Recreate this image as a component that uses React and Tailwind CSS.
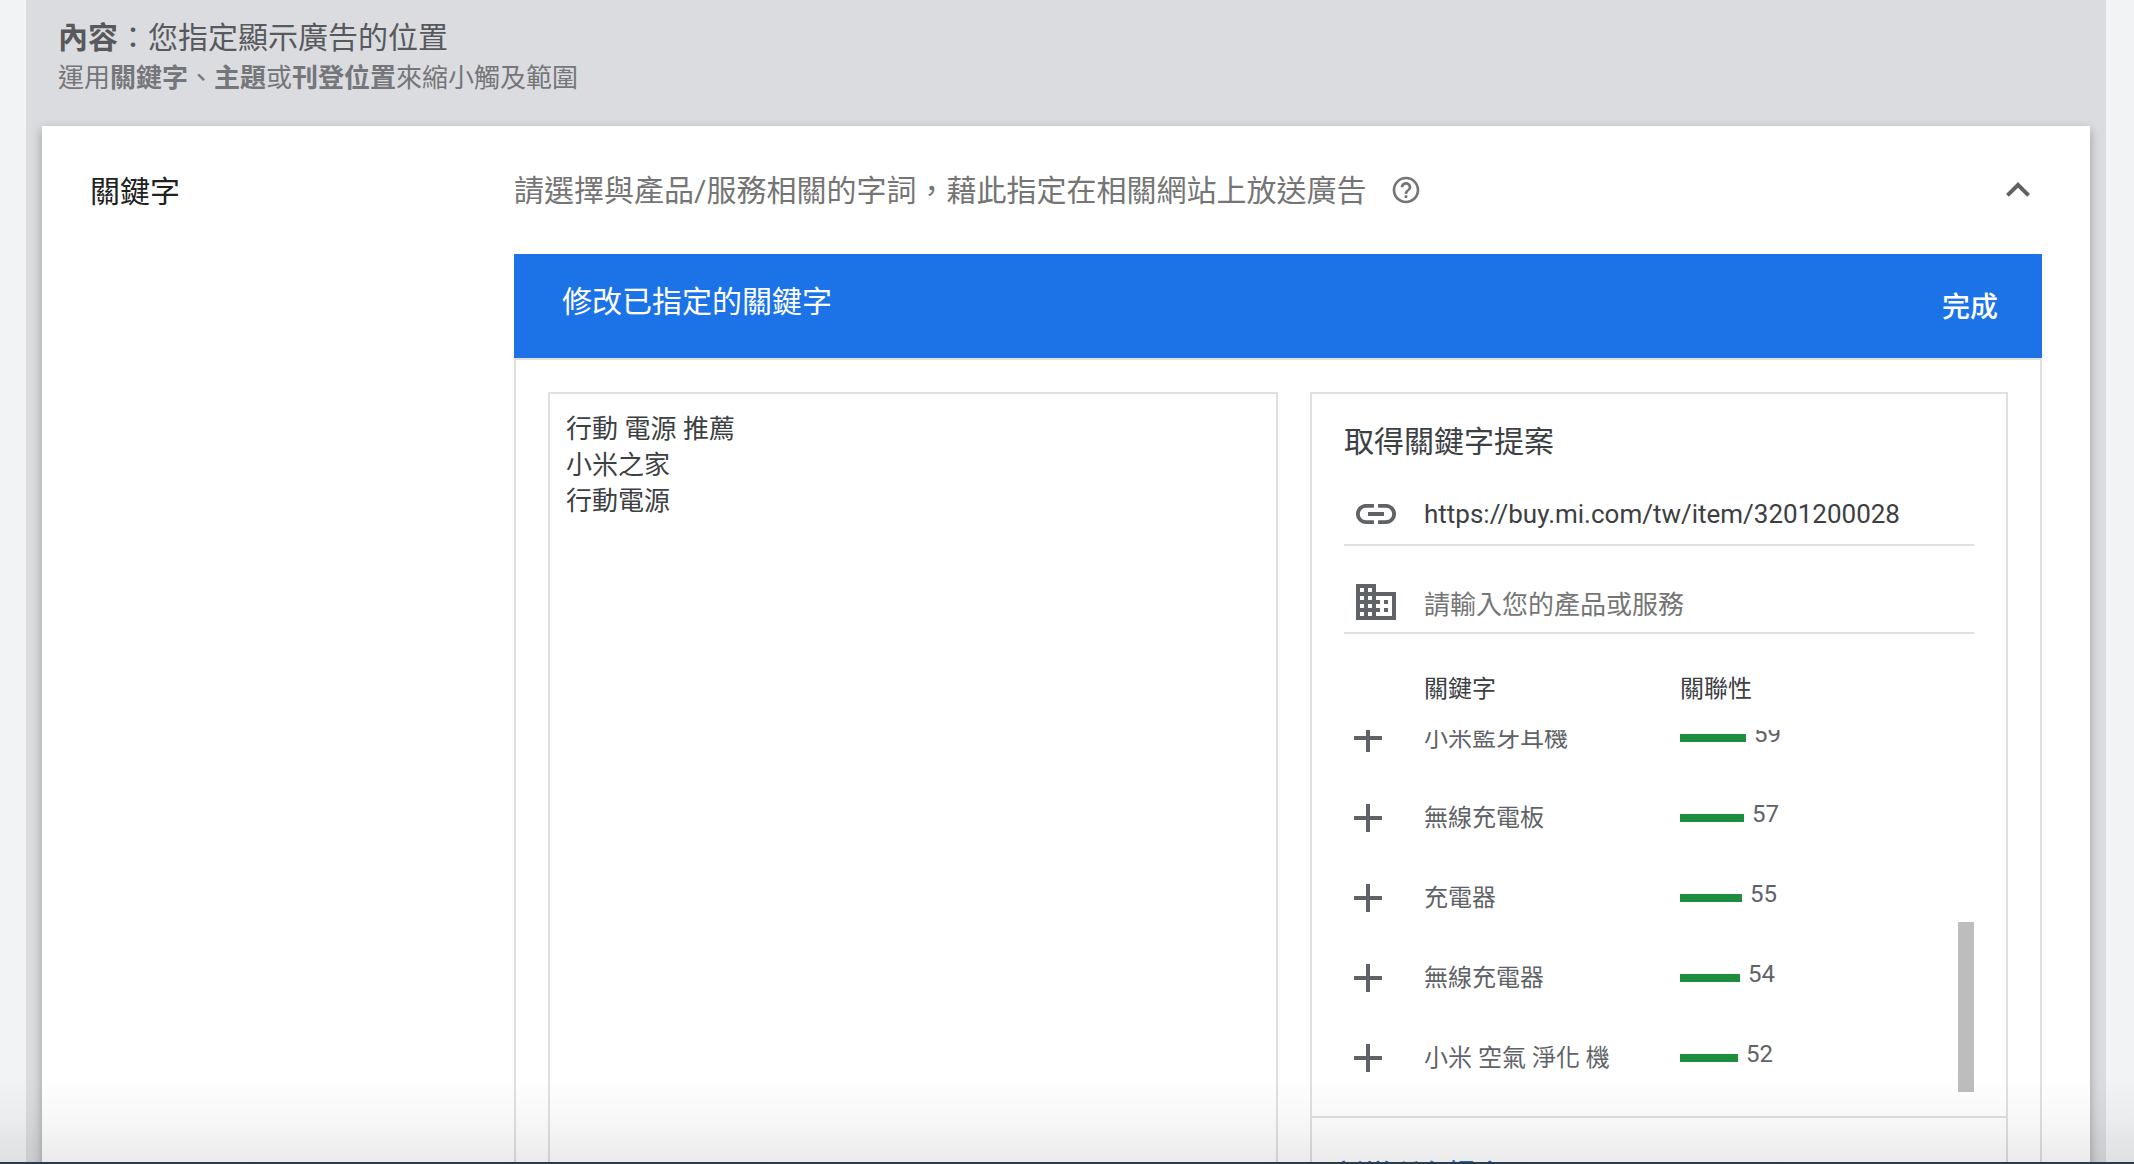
import React, { useState } from "react";
import {
  MdAdd,
  MdBusiness,
  MdExpandLess,
  MdHelpOutline,
  MdLink,
} from "react-icons/md";

const suggestions = [
  { keyword: "小米藍牙耳機", score: 59 },
  { keyword: "無線充電板", score: 57 },
  { keyword: "充電器", score: 55 },
  { keyword: "無線充電器", score: 54 },
  { keyword: "小米 空氣 淨化 機", score: 52 },
];

const SectionHeader = () => (
  <header className="px-8 pt-4 pb-[30px]">
    <h1 className="text-[30px] leading-[44px] text-[#58595c]">
      <b>內容</b>：您指定顯示廣告的位置
    </h1>
    <p className="text-[26px] leading-9 text-[#757679]">
      運用<b>關鍵字</b>、<b>主題</b>或<b>刊登位置</b>來縮小觸及範圍
    </p>
  </header>
);

const SuggestionList = ({ onAdd }) => (
  <div className="relative h-[362px] overflow-hidden">
    <table className="-mt-8 w-full table-fixed text-left text-2xl text-[#5f6368]">
      <colgroup>
        <col className="w-20" />
        <col className="w-64" />
        <col />
      </colgroup>
      <tbody>
        {suggestions.map((item) => (
          <tr key={item.keyword} className="h-20">
            <td className="p-0">
              <button
                type="button"
                aria-label={`新增 ${item.keyword}`}
                className="block"
                onClick={() => onAdd(item.keyword)}
              >
                <MdAdd size={48} />
              </button>
            </td>
            <td className="p-0">{item.keyword}</td>
            <td className="p-0">
              <div className="flex items-center gap-2">
                <div
                  className="h-2 bg-[#1e8e3e]"
                  style={{ width: Math.round(item.score * 1.12) }}
                />
                <span className="pb-2">{item.score}</span>
              </div>
            </td>
          </tr>
        ))}
      </tbody>
    </table>
    <div className="absolute right-0 bottom-0 h-[170px] w-4 bg-[#bdbdbd]" />
  </div>
);

const Suggestions = ({ onAdd }) => {
  const [url, setUrl] = useState("https://buy.mi.com/tw/item/3201200028");
  const [product, setProduct] = useState("");

  return (
    <aside className="w-[698px] shrink-0 border-2 border-[#e0e0e0] text-[#3c4043]">
      <div className="px-8 pt-6 pb-6">
        <h2 className="text-[30px] leading-[48px]">取得關鍵字提案</h2>
        <div className="mt-6 flex h-14 items-start border-b-2 border-[#e0e0e0] pl-2">
          <MdLink size={48} className="shrink-0 text-[#5f6368]" />
          <input
            type="url"
            aria-label="網址"
            className="ml-6 h-12 min-w-0 flex-1 text-[26px] outline-none"
            value={url}
            onChange={(e) => setUrl(e.target.value)}
          />
        </div>
        <div className="mt-8 flex h-14 items-start border-b-2 border-[#e0e0e0] pl-2">
          <MdBusiness size={48} className="shrink-0 text-[#5f6368]" />
          <input
            type="text"
            aria-label="產品或服務"
            className="ml-6 h-[54px] min-w-0 flex-1 text-[26px] outline-none placeholder:text-[#757575]"
            placeholder="請輸入您的產品或服務"
            value={product}
            onChange={(e) => setProduct(e.target.value)}
          />
        </div>
        <div className="flex h-24 pt-9 pl-20 text-2xl leading-[38px]">
          <span className="w-64">關鍵字</span>
          <span>關聯性</span>
        </div>
        <SuggestionList onAdd={onAdd} />
      </div>
      <div className="border-t-2 border-[#e0e0e0] px-6 pt-[38px]">
        <button type="button" className="text-[28px] leading-10 font-medium text-[#1a73e8]">
          新增所有提案
        </button>
      </div>
    </aside>
  );
};

const App = () => {
  const [keywords, setKeywords] = useState("行動 電源 推薦\n小米之家\n行動電源");

  const addKeyword = (keyword) => setKeywords((prev) => `${prev}\n${keyword}`);

  return (
    <div
      lang="zh-Hant"
      className="relative h-screen overflow-hidden bg-[#f1f3f4] pr-7 pl-[26px] font-[Roboto,'Noto_Sans_CJK_TC',sans-serif]"
    >
      <main className="flex h-full flex-col bg-[#dadce0]">
        <SectionHeader />
        <div className="h-[1100px] shrink-0 px-4">
          <section className="flex h-full bg-white pr-12 pl-12 shadow-[0_4px_10px_rgba(0,0,0,0.3)]">
            <h2 className="w-[424px] shrink-0 pt-11 text-[30px] leading-[44px] text-[#212121]">
              關鍵字
            </h2>
            <div className="flex min-w-0 flex-1 flex-col">
              <div className="flex h-32 shrink-0 items-center text-[30px] text-[#757575]">
                <p>請選擇與產品/服務相關的字詞，藉此指定在相關網站上放送廣告</p>
                <button type="button" aria-label="說明" className="ml-6">
                  <MdHelpOutline size={32} />
                </button>
                <button type="button" aria-label="收合" className="ml-auto text-[#616161]">
                  <MdExpandLess size={48} />
                </button>
              </div>
              <div className="flex h-[104px] shrink-0 items-center justify-between bg-[#1c73e8] pr-11 pl-12 text-white">
                <h3 className="pb-2.5 text-[30px]">修改已指定的關鍵字</h3>
                <button type="button" className="pt-1 text-[28px] font-medium">
                  完成
                </button>
              </div>
              <div className="flex flex-1 gap-8 border-2 border-[#e0e0e0] p-8">
                <textarea
                  aria-label="關鍵字"
                  className="min-w-0 flex-1 resize-none border-2 border-[#e0e0e0] px-4 pt-[17px] text-[26px] leading-9 text-[#3c4043] outline-none"
                  value={keywords}
                  onChange={(e) => setKeywords(e.target.value)}
                />
                <Suggestions onAdd={addKeyword} />
              </div>
            </div>
          </section>
        </div>
      </main>
      <div className="pointer-events-none absolute inset-x-0 bottom-0 h-22 border-b-2 border-[#2c3b4a] bg-linear-to-b from-transparent via-black/3 to-black/8" />
    </div>
  );
};

export default App;
